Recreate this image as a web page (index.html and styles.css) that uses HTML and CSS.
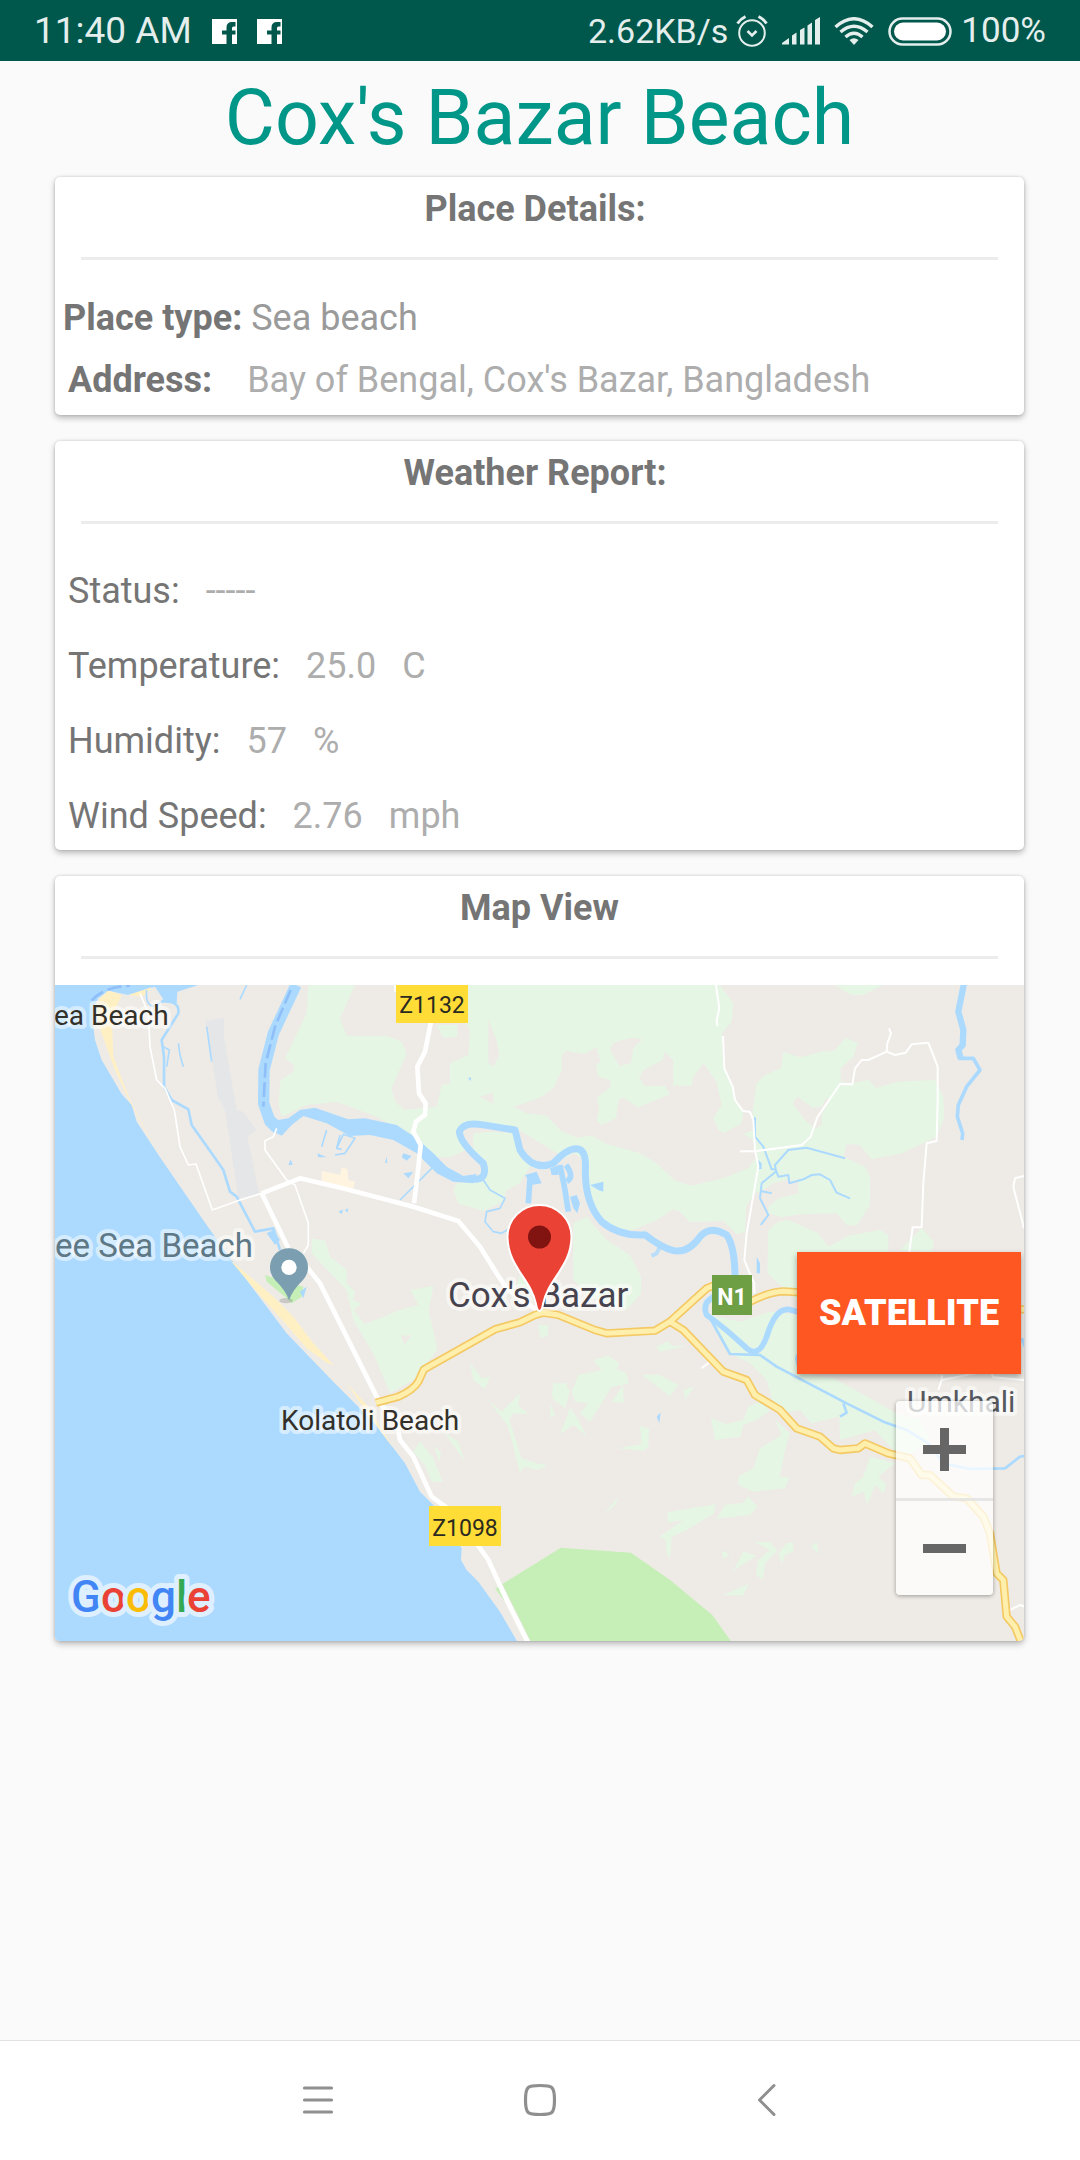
FILE: index.html
```html
<!DOCTYPE html>
<html lang="en">
<head>
<meta charset="utf-8">
<meta name="viewport" content="width=device-width, initial-scale=1">
<title>Cox's Bazar Beach</title>
<link rel="stylesheet" href="styles.css">
</head>
<body>
<div class="screen">
  <header class="statusbar">
    <div class="status-left">
      <span class="clock">11:40 AM</span>
      <svg class="fb" viewBox="0 0 25 25" aria-hidden="true"><path fill="#fff" fill-rule="evenodd" d="M0 0H25V25H20V15.500H23.500V11.500H20V9Q20 7.500 21.500 7.500H23.500V3H20Q14.500 3 14.500 8.500V11.500H10V15.500H14.500V25H0Z"/></svg>
      <svg class="fb" viewBox="0 0 25 25" aria-hidden="true"><path fill="#fff" fill-rule="evenodd" d="M0 0H25V25H20V15.500H23.500V11.500H20V9Q20 7.500 21.500 7.500H23.500V3H20Q14.500 3 14.500 8.500V11.500H10V15.500H14.500V25H0Z"/></svg>
    </div>
    <div class="status-right">
      <span class="meter">2.62KB/s</span>
      <svg class="i-alarm" width="32" height="32" viewBox="0 0 32 32" fill="none" stroke="#e4efed" stroke-width="2" aria-hidden="true"><circle cx="16" cy="18" r="12.800"/><path d="M11.500 16 16 20.500 20.500 16" stroke-width="2.600"/><path d="M1.500 8.500Q4.500 4 9.500 1.500M30.500 8.500Q27.500 4 22.500 1.500" stroke-width="3"/></svg>
      <svg class="i-signal" width="38" height="28" viewBox="0 0 38 28" fill="#e4efed" aria-hidden="true"><path d="M0 27.500V26L7 21V27.500ZM10 27.500V18.500L14.500 15.500V27.500ZM18 27.500V13L22.500 10.500V27.500ZM25.500 27.500V8.500L30 5.500V27.500ZM33 27.500V3L38 0V27.500Z"/></svg>
      <svg class="i-wifi" width="40" height="28" viewBox="0 0 40 28" fill="none" stroke="#e4efed" stroke-width="3.400" aria-hidden="true"><path d="M1.500 10Q20-6.500 38.500 10M6.500 15Q20 3.500 33.500 15M11.500 20Q20 12.500 28.500 20"/><path d="M15.500 23Q20 19.500 24.500 23L20 28Z" fill="#e4efed" stroke="none"/></svg>
      <svg class="i-battery" width="64" height="29" viewBox="0 0 64 29" aria-hidden="true"><rect x="1.500" y="1.500" width="61" height="26" rx="13" fill="none" stroke="#e4efed" stroke-width="2.500"/><rect x="6" y="5.500" width="52" height="18" rx="9" fill="#fff"/></svg>
      <span class="percent">100%</span>
    </div>
  </header>

  <main class="content">
    <h1 class="place-title">Cox's Bazar Beach</h1>

    <section class="card details">
      <h2 class="card-title">Place Details:&nbsp;</h2>
      <p class="detail type"><b>Place type: </b><span>Sea beach</span></p>
      <p class="detail address"><b>Address:</b><span>Bay of Bengal, Cox's Bazar, Bangladesh</span></p>
    </section>

    <section class="card weather">
      <h2 class="card-title">Weather Report:&nbsp;</h2>
      <p class="reading">Status: <span>-----</span></p>
      <p class="reading">Temperature: <span>25.0</span><span>C</span></p>
      <p class="reading">Humidity: <span>57</span><span>%</span></p>
      <p class="reading">Wind Speed: <span>2.76</span><span>mph</span></p>
    </section>

    <section class="card">
      <h2 class="card-title">Map View</h2>
      <div class="map">
        <svg class="map-canvas" viewBox="0 0 969 656" preserveAspectRatio="xMidYMid slice" role="img" aria-label="Map of Cox's Bazar">
          <defs>
            <path id="hwy" d="M1008 1598 1075 1580Q1120 1560 1135 1535L1152 1498 1365 1378 1440 1357 1485 1335 1510 1328 1555 1335 1665 1380 1700 1390 1845 1382 1890 1355 2000 1255 2030 1243M1890 1355 1930 1380 2050 1505 2120 1530 2145 1575 2220 1620 2270 1675 2340 1700 2380 1735 2400 1740 2455 1735 2475 1720 2545 1750 2610 1765 2645 1815 2670 1815 2740 1880 2780 1885 2830 1940 2850 1990 2870 2110 2890 2130 2900 2240 2925 2270 2945 2320M2130 1295Q2190 1265 2230 1264L2290 1268M2940 1318H2960"/>
          </defs>
          <rect width="969" height="656" fill="#eeebe6"/>
          <g transform="translate(-15 -115) scale(.333333)" stroke-linejoin="round">
            <!-- vegetation -->
            <g fill="#e5f6e4">
              <path d="M805 345H945L900 445 920 497H1040L1085 515 1100 550 1055 655 1065 695 1095 720 1190 710 1205 645 1230 640V580L1285 555 1290 480 1275 455 1285 345H2040L2080 400 2075 455 2045 490 2050 590 2080 650 2085 690 2110 725 2105 760 2050 790 2035 780 2020 745 2045 705 2030 635 1990 580 1960 620 1955 647H1900V570L1873 545 1868 570 1810 600 1797 625 1815 648H1875L1890 672 1795 712 1750 683 1735 690 1728 745 1685 765 1670 750 1678 715 1670 683 1712 650 1710 630 1675 620 1668 585 1682 575 1670 530 1635 552 1580 543 1565 555V600L1540 655 1500 685 1420 710 1460 730 1520 737 1560 780 1610 803 1655 797 1700 822 1800 850 1850 880 1905 932 1955 947 2050 925 2125 895 2150 860 2140 810 2110 792 2140 780 2138 720 2150 640 2175 615 2223 595 2230 545 2280 562 2345 545 2382 543 2418 503 2453 520 2440 560 2402 595V635L2435 640 2485 630 2508 653 2575 635 2685 630 2710 680 2713 740 2690 800 2585 850 2495 868 2460 825 2420 822 2410 860 2475 890 2490 920V1005L2450 1067 2420 1065 2390 1030 2280 1033 2225 1042 2185 1030V1010L2215 985 2275 970V935L2240 930 2200 940 2160 965 2145 970 2118 1010 2115 1085 2090 1093 2050 1052 1950 1057 1920 1025 1900 1018 1850 1050 1780 1080 1730 1080 1675 1035 1645 970 1635 870 1600 850 1530 890 1470 890 1440 940 1400 960 1388 995 1330 1023 1255 1000 1240 960 1250 940 1330 935 1345 890 1300 840 1300 790 1350 785 1420 790 1440 860 1480 895 1510 890 1560 855 1470 800 1430 775 1320 760 1260 770 1265 800 1290 835 1230 862 1180 860 1140 830 1100 790 1010 740 930 710 890 695 800 705 725 740 715 700 722 630 760 605 762 585 735 565 800 430Z"/>
              <path d="M2385 345H2530L2470 375 2435 376ZM2182 1210 2185 1080 2215 1055 2245 1050 2335 1090 2365 1130 2425 1097 2520 1080 2545 1095V1300H2280ZM2580 1140 2645 1075 2682 1115 2675 1145ZM1600 1060 1640 1040 1700 1110 1770 1155 1803 1220V1270L1760 1320 1650 1280 1600 1230ZM815 1105 855 1112 870 1160 920 1200V1240L945 1265 940 1290 965 1302 940 1320 975 1362 1020 1345 1080 1320 1135 1305 1112 1260 1180 1248 1165 1325 1175 1360 1192 1440 1120 1530 1050 1570 1000 1450 940 1350 920 1260 815 1150Z"/>
              <path d="M1440 1215 1480 1190V1250H1430ZM1290 1478 1325 1525 1350 1520 1335 1558 1300 1530ZM1345 1590 1385 1625 1440 1570 1435 1605 1465 1633 1420 1630 1408 1650 1445 1765 1520 1790 1490 1800 1452 1790 1440 1808 1405 1670ZM1140 1713 1180 1765 1208 1835H1175L1155 1785 1120 1745ZM1215 1690 1255 1715 1275 1775ZM1295 1745 1330 1785ZM1180 1725 1203 1750 1198 1775ZM1495 1365H1525V1395L1500 1405ZM1540 1535 1590 1560 1575 1610 1540 1590Z"/>
              <g transform="translate(1500 1140)">
                <path d="M510 195 600 215 690 185 780 195V370L880 385 1000 450 1070 490 1140 510 1165 560 1160 580 1110 612 1060 600 1005 540 900 570 898 500 875 505 815 520 780 480 730 490 700 460 680 390 630 340 570 310Z"/>
                <path d="M0 235 22 228 18 260H0ZM350 290 385 273 395 288 440 287 360 305ZM160 330 205 317 237 340 230 358 260 370 265 402 215 410 150 515 120 490 145 460 105 455 95 425 115 375 185 360ZM40 400 80 400 85 440 75 475 35 440ZM250 405V458L215 455ZM305 375 355 373 415 405 390 438ZM430 420 462 410 435 450ZM90 475 110 500 140 558 100 525 60 552ZM30 460 45 495 32 505ZM300 528 327 535 325 590 310 602 235 595 305 582ZM513 505 560 522 610 510 625 470 660 455 690 482 650 510 610 525 600 560 525 570ZM705 510 750 550 735 600 720 680 748 682 735 715 640 725 595 705V680L640 655 660 595 725 555ZM990 620 1065 640 1015 680 1040 705 1030 730 1005 705 982 765 970 725 935 740 945 700 970 680ZM382 787 527 763 522 790 440 840 395 860 390 925 380 910 378 870 358 860 430 810 385 818ZM530 806 555 765 610 758 625 740 652 770 630 795ZM642 876 690 876 712 900 675 940 668 990 648 975 655 930 690 900ZM545 902 570 913 550 928ZM580 962 610 905 650 917ZM715 910 740 880 760 878V905L735 915 725 942ZM812 888 830 875 836 912ZM548 1036 625 1002 610 1036ZM190 795 235 740 225 765ZM0 640 18 645 0 652Z"/>
              </g>
            </g>
            <path fill="#e5f6e4" d="M1190 465H1252V500L1210 503Z"/>
            <!-- clearings -->
            <path fill="#eeebe6" d="M1710 540 1720 518 1775 503 1808 508 1780 535 1773 580 1738 588ZM1345 450 1370 510 1378 555 1362 588 1345 580ZM1320 680 1358 668 1362 702ZM2258 700 2273 680 2318 713 2345 710 2358 683 2370 690 2345 735V765L2325 778 2290 745ZM1560 655Q1545 690 1420 710L1480 690 1530 670ZM1083 1397 1115 1395 1093 1425Z"/>
            <path fill="#c5efb6" d="M1387 2142 1500 2072 1562 2033 1773 2048 1890 2130 2017 2235 2077 2320H1475ZM1365 2155 1385 2150 1395 2195Z"/>
            <path fill="#c5efb6" d="M675 1215 720 1230 790 1250 785 1280 755 1300 735 1280 680 1235Z"/>
            <path fill="#e5e6e8" d="M498 452 552 443V500L590 720 610 725 650 780 622 800 658 975 595 985 555 720 533 680Z"/>
            <path fill="#fff4e0" d="M845 903 900 915 905 892 922 897 925 930 945 935 940 955 845 940Z"/>
            <!-- sea and sand -->
            <path fill="#acdaff" d="M45 345H475L412 365 410 400 375 395 345 350 265 375 205 362 175 385 160 410 158 455 165 510 185 570 245 672 275 705 290 755 360 862 500 1065 575 1170 740 1390 880 1535 1000 1655 1095 1780 1140 1865 1180 1905 1265 2035 1263 2070 1280 2100 1315 2135 1380 2225 1435 2320H45Z"/>
            <path fill="#fff0c4" d="M165 420 180 385 205 362 245 375 215 440 220 560 250 640 275 700 360 862 275 705 225 600 185 490ZM570 1170 600 1195 700 1280 760 1340 820 1420 880 1485 860 1478 800 1435 740 1365 650 1265ZM920 1540 980 1605 1060 1735 990 1640ZM265 375 335 352 325 365 305 380Z"/>
            <g fill="none" stroke="#acdaff">
              <path stroke-width="34" d="M768 345 700 490 672 600 671 700 690 755 715 778"/>
              <path fill="#acdaff" stroke="none" d="M690 730 715 750 745 745 780 720 825 713 925 748 975 745 1070 765 1130 805 1180 850 1220 890 1270 918 1310 912 1300 940 1240 935 1190 910 1130 850 1060 810 990 795 930 798 860 760 790 738 755 765 725 797 690 780Z"/>
              <path stroke-width="21" d="M1300 928Q1345 930 1330 880 1260 820 1258 785 1270 755 1325 764L1425 780 1440 840Q1480 905 1540 880 1580 835 1610 836 1640 838 1636 900 1635 1000 1685 1055 1740 1100 1815 1094 1860 1130 1900 1142 1945 1150 1980 1100 2010 1065 2060 1095 2085 1130 2085 1225"/>
              <path stroke-width="17" d="M2020 1280Q1985 1300 2000 1335 2050 1370 2115 1430 2155 1470 2180 1400 2205 1315 2245 1318L2290 1330"/>
              <path stroke-width="8" d="M2005 1335 2070 1452 2160 1455 2210 1490 2420 1600 2530 1655 2600 1680 2665 1720 2710 1780 2790 1797 2895 1795 2940 1760 2955 1758M2410 1600 2420 1628 2400 1640"/>
              <path stroke-width="8" d="M365 395Q420 390 415 430L365 510 372 560V650L395 690 445 718 455 765 515 850 550 900 570 965 590 980 645 1085 700 1075 720 1140"/>
              <path stroke-width="5" d="M320 360Q315 410 345 408L400 370M370 530 388 540 380 590M415 520 420 555 430 590M500 470 515 575M845 830 860 780M890 835 910 793 945 805 915 850 885 855M900 795 890 835 905 838M620 345 600 388M1080 990 1175 895M1330 930 1350 960 1395 985 1380 1015 1340 1025 1335 1055 1360 1085 1385 1090 1410 1075"/>
              <path stroke-width="6" d="M2145 742V800L2170 830 2195 898H2207L2205 885 2245 840 2300 833 2415 865M2207 898 2215 920 2245 915 2248 940 2290 928 2315 915 2340 913 2370 930 2390 968 2430 985M2207 905 2165 940 2160 985 2185 1035 2162 1065M2162 963 2195 970"/>
              <path stroke-width="19" d="M2772 340 2755 425 2770 480 2768 525 2755 540 2762 565"/>
              <path stroke-width="11" d="M2755 565H2800L2820 600 2780 650 2755 705 2752 740 2768 790 2766 810"/>
              <path stroke-width="12" d="M1860 1130 1850 1150 1835 1158" opacity=".8"/>
              <path stroke-width="17" d="M1470 925 1465 1000M1560 885 1575 960 1585 1025M1578 885Q1605 920 1580 935"/>
              <path fill="#acdaff" stroke="none" d="M1455 915 1490 905 1505 940 1475 945ZM1530 895 1560 885 1555 915 1535 915ZM1590 980 1610 975 1620 1000 1612 1030 1600 1015ZM1650 945 1690 935V965L1675 960ZM1090 850 1115 858 1100 872 1085 862ZM1090 910 1120 905 1105 925ZM832 850 860 862 835 862ZM745 885 752 868 758 885ZM1035 878 1040 860 1042 880ZM895 1025 910 1018 905 1032ZM915 1020 925 1015 922 1028ZM1283 625 1293 622V633ZM680 1090 700 1080 720 1110 705 1125ZM2150 1160 2160 1180V1210H2150ZM1850 1640 1862 1627 1858 1660ZM2155 870 2165 880V897L2155 898ZM780 1265 800 1250 790 1285ZM2265 1465 2275 1440V1510ZM2940 1405H2952V1435Z"/>
            </g>
            <path fill="none" stroke="#8fbff8" stroke-width="8" stroke-dasharray="44 14" d="M752 360 705 470 677 580 670 710M155 392Q190 350 270 347"/>
            <!-- minor roads -->
            <g fill="none" stroke="#fff">
              <path stroke-width="14" d="M1173 455 1155 545 1132 590 1137 670 1157 700 1155 735 1128 755 1120 785 1142 825 1132 920 1122 1000M665 970 780 925 920 958 1120 1010 1255 1053 1320 1130 1370 1210 1400 1255 1490 1320M665 970 745 1135M800 1190 840 1240 930 1420 1020 1600 1070 1660 1080 1710 1120 1760 1175 1880 1250 1935 1345 2070 1400 2190 1465 2320"/>
              <path stroke-width="5" d="M300 370 325 430 330 530 350 630 375 655 403 720 420 830 445 885 468 882 517 1020 600 990 665 970M710 775 700 800 675 812V840L740 930 765 945 805 1060V1125L790 1150M1065 345V365"/>
              <path stroke-width="6" d="M2028 345 2038 415 2030 450 2032 468M2049 498 2053 595 2078 650 2085 690 2108 722 2130 726 2140 750 2145 840 2155 890 2120 1090 2113 1170 2125 1200 2143 1240V1270M2100 844H2145L2285 825 2312 800 2332 742 2400 642 2437 643 2445 595 2465 570H2485L2540 545 2565 555 2597 548 2615 523 2665 518 2693 590V690L2690 813 2660 820 2650 940 2645 1072H2618L2608 1145M2540 545 2542 520 2553 490 2547 475M2952 918 2925 925 2920 950 2952 1075M1985 1495 2010 1475M2705 1515V1530L2805 1510M2695 1560 2705 1530M2855 1512 2860 1522 2955 1530M2910 2220 2940 2205 2955 2210"/>
            </g>
            <!-- highways: casing below, surface above -->
            <use href="#hwy" fill="none" stroke="#f4c963" stroke-width="25"/>
            <use href="#hwy" fill="none" stroke="#ffefac" stroke-width="15"/>
            <!-- park pin -->
            <ellipse cx="738" cy="1292" rx="20" ry="8" fill="#777" opacity=".3"/>
            <path fill="#7b9fb0" d="M747 1291Q738 1262 705 1230A57 57 0 1 1 789 1230Q756 1262 747 1291Z"/>
            <circle cx="747" cy="1192" r="23" fill="#fff"/>
          </g>

          <g class="label dark">
            <text x="-1" y="40">ea Beach</text>
            <text x="226" y="445">Kolatoli Beach</text>
          </g>
          <text class="label poi" x="0" y="272">ee Sea Beach</text>
          <text class="label city" x="393" y="322">Cox's Bazar</text>
          <text class="label village" x="852" y="427">Umkhali</text>
          <g fill="#ffdc36"><rect x="341" width="72" height="38"/><rect x="374" y="521" width="72" height="40"/></g>
          <rect x="657" y="290" width="40" height="40" fill="#6e9f44"/>
          <text class="shield" x="377" y="28">Z1132</text>
          <text class="shield" x="410" y="551">Z1098</text>
          <text class="shield shield-national" x="677" y="320">N1</text>

          <!-- place marker -->
          <path fill="#ea4335" stroke="#fff" stroke-width="2" d="M484.500 326Q482 326 481 319C476 294 453 282 452.500 252A32 32 0 0 1 516.500 252C516 282 493 294 488 319Q487 326 484.500 326Z"/>
          <circle cx="484.500" cy="252" r="11.500" fill="#811411"/>

          <text class="google" x="16" y="627"><tspan fill="#4285f4">G</tspan><tspan fill="#ea4335">o</tspan><tspan fill="#fbbc05">o</tspan><tspan fill="#4285f4">g</tspan><tspan fill="#34a853">l</tspan><tspan fill="#ea4335">e</tspan></text>
        </svg>
        <button class="satellite" type="button">SATELLITE</button>
        <div class="zoom">
          <button type="button" aria-label="Zoom in"><svg width="43" height="43" viewBox="0 0 43 43"><path fill="#666" d="M17 0H26V17H43V26H26V43H17V26H0V17H17Z"/></svg></button>
          <button type="button" aria-label="Zoom out"><svg width="43" height="43" viewBox="0 0 43 43"><path fill="#666" d="M0 17H43V26H0Z"/></svg></button>
        </div>
      </div>
    </section>
  </main>

  <nav class="navbar" aria-label="System">
    <button type="button" aria-label="Recent apps"><svg width="48" height="48" viewBox="0 0 48 48" stroke="#8f8f8f" stroke-width="3.200" stroke-linecap="round"><path d="M13.500 11H40.500M13.500 23H40.500M13.500 35H40.500"/></svg></button>
    <button type="button" aria-label="Home"><svg width="48" height="48" viewBox="0 0 48 48" fill="none" stroke="#8f8f8f" stroke-width="3.200"><path d="M24 8.500C36 8.500 38.500 9 38.500 23S36 37.500 24 37.500 9.500 37 9.500 23 12 8.500 24 8.500Z"/></svg></button>
    <button type="button" aria-label="Back"><svg width="48" height="48" viewBox="0 0 48 48" fill="none" stroke="#8f8f8f" stroke-width="3" stroke-linecap="round" stroke-linejoin="round"><path d="M33 8.500 18.500 23 33 37.500"/></svg></button>
  </nav>
</div>
</body>
</html>
```
FILE: styles.css
```css
* { box-sizing: border-box; }

body {
  margin: 0;
  background: #fafafa;
  color: #757575;
  font-family: Roboto, "Liberation Sans", sans-serif;
  font-size: 36px;
  line-height: 42px;
}

h1, h2, p { margin: 0; }

button {
  border: 0;
  padding: 0;
  font: inherit;
}

svg { display: block; }

.screen {
  display: flex;
  flex-direction: column;
  min-height: 100vh;
}

/* status bar */
.statusbar {
  display: flex;
  justify-content: space-between;
  align-items: center;
  height: 61px;
  padding: 1px 34px 0;
  background: #00574b;
  color: #e4efed;
}

.status-left { display: flex; align-items: center; gap: 20px; }
.status-right { display: flex; align-items: center; }
.clock { font-size: 37px; }
.fb { width: 25px; height: 25px; }
.meter { font-size: 34px; }
.percent { font-size: 35px; }
.i-alarm { margin-left: 8px; }
.i-signal { margin-left: 14px; }
.i-wifi { margin-left: 14px; }
.i-battery { margin: 0 9px 0 14px; }

/* content */
.content {
  flex: 1;
  display: flex;
  flex-direction: column;
  gap: 26px;
  padding: 0 56px 26px 55px;
}

.place-title {
  margin-bottom: -26px;
  padding: 12px 0 14px;
  color: #009688;
  font-size: 77px;
  font-weight: 400;
  line-height: 90px;
  text-align: center;
}

.card {
  overflow: hidden;
  border-radius: 5px;
  background: #fff;
  box-shadow: 0 3px 6px rgba(0, 0, 0, .26), 0 0 3px rgba(0, 0, 0, .16);
}

.card-title {
  margin: 0 26px 26px;
  padding: 11px 0 27px;
  border-bottom: 3px solid #ececec;
  font-size: 36px;
  font-weight: 700;
  text-align: center;
}

.details { padding-bottom: 14px; }
.detail { padding: 0 8px; white-space: pre-wrap; }
.type { padding-top: 11px; color: #9a9a9a; }
.address { display: flex; gap: 35px; padding: 20px 13px 0; color: #adadad; }
.detail b { color: #757575; }

.weather { padding-bottom: 13px; }
.reading {
  display: flex;
  gap: 26px;
  padding: 33px 13px 0;
}
.card-title + .reading { padding-top: 20px; }
.reading span { color: #adadad; }

/* map */
.map { position: relative; height: 656px; }
.map-canvas { width: 100%; height: 100%; }
.label {
  paint-order: stroke;
  stroke: rgba(255, 255, 255, .5);
  stroke-width: 8px;
  stroke-linejoin: round;
}
.dark { fill: #33302a; font-size: 28px; }
.poi { fill: #5e7885; font-size: 33px; }
.city { fill: #46434f; font-size: 35px; }
.village { fill: #55585e; font-size: 30px; }
.shield { fill: #2b2a20; font-size: 23px; text-anchor: middle; }
.shield-national { fill: #fff; font-weight: 700; }
.google {
  font-size: 44px;
  font-weight: 500;
  paint-order: stroke;
  stroke: #def0ff;
  stroke-width: 10px;
  stroke-linejoin: round;
}

.satellite {
  position: absolute;
  top: 267px;
  right: 3px;
  width: 224px;
  height: 122px;
  background: #ff5722;
  color: #fff;
  font-weight: 900;
  box-shadow: 0 3px 6px rgba(0, 0, 0, .35);
}

.zoom {
  position: absolute;
  right: 31px;
  bottom: 46px;
  width: 97px;
  overflow: hidden;
  border-radius: 4px;
  box-shadow: 0 1px 4px rgba(0, 0, 0, .35);
}
.zoom button {
  display: grid;
  place-items: center;
  width: 100%;
  height: 97px;
  background: rgba(255, 255, 255, .75);
}
.zoom button + button { border-top: 3px solid rgba(225, 225, 225, .8); }

/* navigation bar */
.navbar {
  display: flex;
  justify-content: center;
  height: 120px;
  border-top: 1px solid #e2e2e2;
  background: #fff;
}
.navbar button {
  display: grid;
  place-items: center;
  width: 225px;
  background: none;
}
```
